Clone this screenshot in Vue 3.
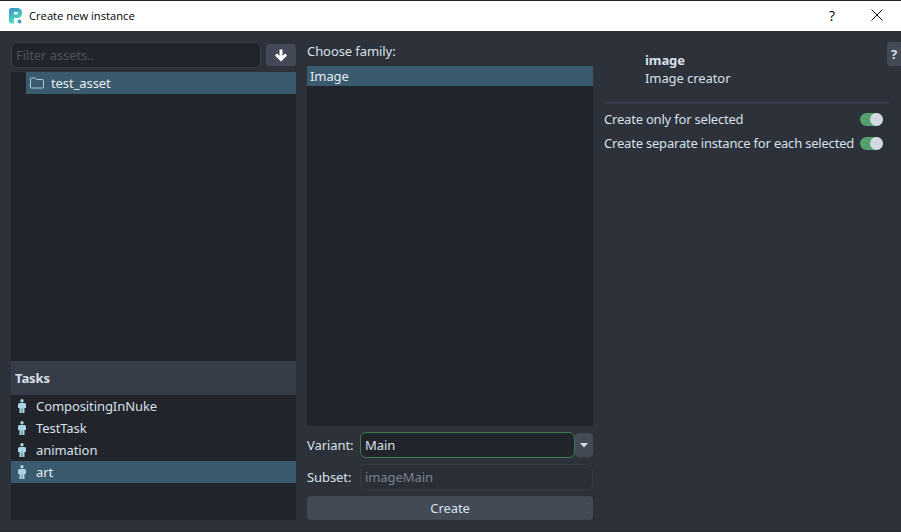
<script setup>
const tasks = [
  { name: 'CompositingInNuke', selected: false },
  { name: 'TestTask', selected: false },
  { name: 'animation', selected: false },
  { name: 'art', selected: true }
]
const options = ['Create only for selected', 'Create separate instance for each selected']
</script>

<template>
  <div class="window">
    <header class="titlebar">
      <svg class="logo" viewBox="0 0 14 16" width="14" height="16">
        <defs>
          <linearGradient id="lg" x1="0" y1="0" x2="0.3" y2="1">
            <stop offset="0" stop-color="#3d8fc4" />
            <stop offset="1" stop-color="#4fe0c0" />
          </linearGradient>
        </defs>
        <path fill="url(#lg)" fill-rule="evenodd" d="M0 2.5Q0 0 2.5 0H8Q13 0 13 5T8 10H5V15.500H2.500Q0 15.500 0 13ZM5 4V6.500H7.500Q9 6.500 9 5.200T7.500 4Z" />
        <circle cx="10.500" cy="13.500" r="2" fill="#3aa5c8" />
      </svg>
      <span class="title">Create new instance</span>
      <span class="spacer"></span>
      <span class="qmark">?</span>
      <svg class="close" viewBox="0 0 12 12" width="12" height="12">
        <path d="M.5.500 11.500 11.500M11.500.500.5 11.500" stroke="#111" stroke-width="1" fill="none" />
      </svg>
    </header>

    <main class="content">
      <section class="col left">
        <div class="filter-row">
          <div class="field filter">Filter assets..</div>
          <button class="arrow-btn">
            <svg viewBox="0 0 14 14" width="14" height="14">
              <path d="M7 1.500V11M2 6.500 7 11.500 12 6.500" stroke="#fff" stroke-width="3" fill="none" />
            </svg>
          </button>
        </div>
        <div class="tree">
          <div class="tree-row">
            <svg viewBox="0 0 14 12" width="14" height="12" class="folder">
              <path d="M.5 2Q.5 1 1.500 1H5L6.500 2.500H12.500Q13.500 2.500 13.500 3.500V10Q13.500 11 12.500 11H1.500Q.5 11 .5 10Z" stroke="#a9d2d8" fill="none" />
            </svg>
            <span>test_asset</span>
          </div>
        </div>
        <div class="tasks-header">Tasks</div>
        <ul class="tasks">
          <li v-for="t in tasks" :key="t.name" class="task" :class="{ selected: t.selected }">
            <svg viewBox="0 0 8 14" width="8" height="14" class="person">
              <circle cx="4" cy="1.700" r="1.700" fill="#a9d4e4" />
              <path d="M1.500 4H6.500Q8 4 8 5.500V9H6.500V14H4.300V9.500H3.700V14H1.500V9H0V5.500Q0 4 1.500 4Z" fill="#a9d4e4" />
            </svg>
            <span>{{ t.name }}</span>
          </li>
        </ul>
      </section>

      <section class="col middle">
        <div class="choose">Choose family:</div>
        <div class="family-list">
          <div class="family selected">Image</div>
        </div>
        <div class="form">
          <label class="lbl">Variant:</label>
          <div class="variant-wrap">
            <div class="field variant">Main</div>
            <button class="drop">
              <svg viewBox="0 0 8 5" width="8" height="5"><path d="M0 0H8L4 4.500Z" fill="#d7dde6" /></svg>
            </button>
          </div>
          <label class="lbl">Subset:</label>
          <div class="field subset">imageMain</div>
        </div>
        <button class="create">Create</button>
      </section>

      <section class="col right">
        <div class="info">
          <div class="name">image</div>
          <div class="desc">Image creator</div>
        </div>
        <div class="divider"></div>
        <div v-for="o in options" :key="o" class="option">
          <span class="opt-label">{{ o }}</span>
          <span class="toggle"><i class="knob"></i></span>
        </div>
      </section>

      <button class="help">?</button>
    </main>
  </div>
</template>

<style>
html, body { margin: 0; background: #2c313a; }
</style>

<style scoped>
.window {
  width: 901px;
  height: 532px;
  box-sizing: border-box;
  border-top: 1px solid #222;
  border-bottom: 1px solid #23272e;
  display: flex;
  flex-direction: column;
  background: #2c313a;
  color: #d9e0ea;
  font-family: "Noto Sans", sans-serif;
  font-size: 13px;
  letter-spacing: -0.08px;
  overflow: hidden;
}
.titlebar {
  height: 30px;
  flex: none;
  box-sizing: border-box;
  padding: 0 0 2px 9px;
  background: #fff;
  display: flex;
  align-items: center;
  color: #000;
  letter-spacing: 0;
}
.logo { margin: 2px 6px 0 0; }
.title { font-family: "Open Sans", sans-serif; font-size: 11.200px; }
.spacer { flex: 1; }
.qmark { font-size: 14px; font-family: "Open Sans", sans-serif; margin-right: 36px; }
.close { margin-right: 18px; }
.content {
  position: relative;
  flex: 1;
  display: flex;
  gap: 11px;
  padding: 11px 12px 11px 11px;
  min-height: 0;
}
.col { display: flex; flex-direction: column; min-height: 0; }
.left { width: 285px; }
.middle { width: 286px; }
.right { width: 285px; }
.filter-row { display: flex; gap: 5px; height: 26px; flex: none; }
.field {
  box-sizing: border-box;
  background: #21252b;
  border: 1px solid #363b44;
  border-radius: 6px;
  display: flex;
  align-items: center;
  padding: 0 4px;
}
.filter { flex: 1; color: #4c525c; }
.arrow-btn {
  width: 30px;
  height: 22px;
  margin-top: 2px;
  padding: 0;
  border: 0;
  border-radius: 4px;
  background: #434a56;
  display: flex;
  align-items: center;
  justify-content: center;
}
.tree {
  margin-top: 4px;
  flex: 1;
  background: #21252b;
  min-height: 0;
}
.tree-row {
  margin-left: 15px;
  height: 22px;
  box-sizing: border-box;
  padding: 0 0 1px 4px;
  background: #3a5a6d;
  display: flex;
  align-items: center;
  gap: 7px;
  color: #e8edf3;
}
.tasks-header {
  flex: none;
  height: 34px;
  background: #373d48;
  display: flex;
  align-items: center;
  padding-left: 4px;
  font-weight: 700;
}
.tasks {
  flex: none;
  height: 125px;
  margin: 0;
  padding: 0;
  list-style: none;
  background: #21252b;
}
.task {
  height: 22px;
  display: flex;
  align-items: center;
  gap: 10px;
  padding-left: 7px;
}
.task.selected { background: #3a5a6d; color: #e8edf3; }
.choose { height: 24px; flex: none; line-height: 18px; }
.family-list { flex: 1; background: #21252b; min-height: 0; }
.family { height: 20px; line-height: 20px; padding-left: 3px; }
.family.selected { background: #3a5a6d; color: #e8edf3; }
.form {
  flex: none;
  display: grid;
  grid-template-columns: 53px 1fr;
  row-gap: 6px;
  margin-top: 6px;
  align-items: center;
}
.lbl { display: block; }
.variant-wrap { display: flex; align-items: center; }
.variant {
  flex: 1;
  height: 26px;
  border-color: #3a7d50;
  color: #d9e0ea;
}
.drop {
  width: 18px;
  height: 24px;
  padding: 0;
  border: 0;
  border-radius: 4px;
  background: #434a56;
  display: flex;
  align-items: center;
  justify-content: center;
}
.subset { height: 26px; color: #7b828d; background: #2a2e36; border-color: #343942; }
.create {
  flex: none;
  margin-top: 6px;
  height: 24px;
  border: 0;
  border-radius: 4px;
  background: #434a56;
  color: #d9e0ea;
  font: inherit;
  letter-spacing: inherit;
  padding: 0;
}
.info { height: 60px; flex: none; padding-left: 41px; padding-top: 9px; box-sizing: border-box; }
.name { font-weight: 700; line-height: 18px; }
.desc { line-height: 18px; }
.divider { height: 2px; background: #373d48; margin-bottom: 3px; }
.option {
  height: 24px;
  display: flex;
  align-items: center;
  justify-content: space-between;
  padding-right: 6px;
}
.opt-label { white-space: nowrap; letter-spacing: -0.2px; }
.toggle {
  flex: none;
  width: 23px;
  height: 13px;
  border-radius: 7px;
  background: #56a06f;
  position: relative;
}
.knob {
  position: absolute;
  right: 0;
  top: 0;
  width: 13px;
  height: 13px;
  border-radius: 50%;
  background: #d4d8e0;
}
.help {
  position: absolute;
  right: 0;
  top: 11px;
  width: 14px;
  height: 24px;
  padding: 0;
  border: 0;
  border-radius: 4px 0 0 4px;
  background: #434a56;
  color: #d9e0ea;
  font: 700 13px "Noto Sans", sans-serif;
}
</style>
